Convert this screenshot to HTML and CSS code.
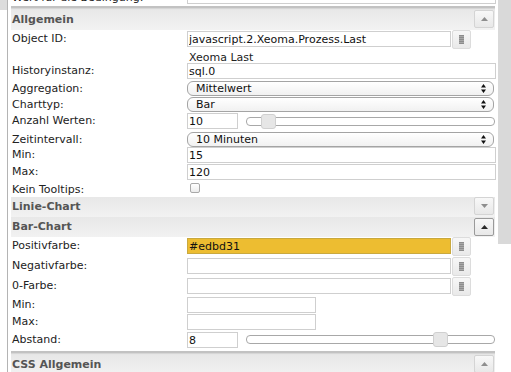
FILE: index.html
```html
<!DOCTYPE html>
<html lang="de">

<head>
    <meta charset="UTF-8">
    <meta name="viewport" content="width=device-width, initial-scale=1.0">
    <title>Widget Attribute - Chart</title>
    <link rel="stylesheet" href="styles.css">
</head>

<body>
    <div class="screen">
        <div class="gutter"></div>

        <div class="panel">
            <!-- last row of the previous group, scrolled half out of view -->
            <div class="row row-cut">
                <span class="lbl">Wert für die Bedingung:</span>
                <input class="field full" type="text" value="">
            </div>
            <div class="rule"></div>

            <div class="group">
                <span class="group-title">Allgemein</span>
                <span class="toggle"><svg width="7" height="4" viewBox="0 0 7 4"><path d="M0 4L3.5 0L7 4Z" /></svg></span>
            </div>

            <div class="row h20">
                <span class="lbl">Object ID:</span>
                <input class="field wide" type="text" value="javascript.2.Xeoma.Prozess.Last">
                <span class="pick"><svg width="5" height="9" viewBox="0 0 5 9"><rect width="5" height="9" fill="#8c8c8c" /><path d="M0 1.5H5M0 3.5H5M0 5.5H5M0 7.5H5" stroke="#a8a8a8" stroke-width="1" /></svg></span>
            </div>
            <div class="row h12">
                <span class="lbl"></span>
                <span class="note">Xeoma Last</span>
            </div>
            <div class="row h18">
                <span class="lbl">Historyinstanz:</span>
                <input class="field full" type="text" value="sql.0">
            </div>
            <div class="row h16">
                <span class="lbl">Aggregation:</span>
                <div class="select">Mittelwert<svg width="5" height="9" viewBox="0 0 5 9"><path d="M0 3.5L2.5 0L5 3.5ZM0 5.5L2.5 9L5 5.5Z" /></svg></div>
            </div>
            <div class="row h16">
                <span class="lbl">Charttyp:</span>
                <div class="select">Bar<svg width="5" height="9" viewBox="0 0 5 9"><path d="M0 3.5L2.5 0L5 3.5ZM0 5.5L2.5 9L5 5.5Z" /></svg></div>
            </div>
            <div class="row h18">
                <span class="lbl">Anzahl Werten:</span>
                <input class="field small" type="text" value="10">
                <div class="slider slider-count"><span class="handle" style="left: 14px"></span></div>
            </div>
            <div class="row h17 pt2">
                <span class="lbl">Zeitintervall:</span>
                <div class="select">10 Minuten<svg width="5" height="9" viewBox="0 0 5 9"><path d="M0 3.5L2.5 0L5 3.5ZM0 5.5L2.5 9L5 5.5Z" /></svg></div>
            </div>
            <div class="row h17 pt0">
                <span class="lbl">Min:</span>
                <input class="field full" type="text" value="15">
            </div>
            <div class="row h17 pt0">
                <span class="lbl">Max:</span>
                <input class="field full" type="text" value="120">
            </div>
            <div class="row h16">
                <span class="lbl">Kein Tooltips:</span>
                <span class="check"></span>
            </div>

            <div class="group">
                <span class="group-title">Linie-Chart</span>
                <span class="toggle"><svg width="7" height="4" viewBox="0 0 7 4"><path d="M0 0L3.5 4L7 0Z" /></svg></span>
            </div>
            <div class="group">
                <span class="group-title">Bar-Chart</span>
                <span class="toggle active"><svg width="7" height="4" viewBox="0 0 7 4"><path d="M0 4L3.5 0L7 4Z" /></svg></span>
            </div>

            <div class="row h20">
                <span class="lbl">Positivfarbe:</span>
                <input class="field wide colour" type="text" value="#edbd31">
                <span class="pick"><svg width="5" height="9" viewBox="0 0 5 9"><rect width="5" height="9" fill="#8c8c8c" /><path d="M0 1.5H5M0 3.5H5M0 5.5H5M0 7.5H5" stroke="#a8a8a8" stroke-width="1" /></svg></span>
            </div>
            <div class="row h20">
                <span class="lbl">Negativfarbe:</span>
                <input class="field wide" type="text" value="">
                <span class="pick"><svg width="5" height="9" viewBox="0 0 5 9"><rect width="5" height="9" fill="#8c8c8c" /><path d="M0 1.5H5M0 3.5H5M0 5.5H5M0 7.5H5" stroke="#a8a8a8" stroke-width="1" /></svg></span>
            </div>
            <div class="row h20">
                <span class="lbl">0-Farbe:</span>
                <input class="field wide" type="text" value="">
                <span class="pick"><svg width="5" height="9" viewBox="0 0 5 9"><rect width="5" height="9" fill="#8c8c8c" /><path d="M0 1.5H5M0 3.5H5M0 5.5H5M0 7.5H5" stroke="#a8a8a8" stroke-width="1" /></svg></span>
            </div>
            <div class="row h17 pt0">
                <span class="lbl">Min:</span>
                <input class="field medium" type="text" value="">
            </div>
            <div class="row h17 pt0">
                <span class="lbl">Max:</span>
                <input class="field medium" type="text" value="">
            </div>
            <div class="row h19">
                <span class="lbl">Abstand:</span>
                <input class="field small" type="text" value="8">
                <div class="slider slider-gap"><span class="handle" style="left: 186px"></span></div>
            </div>
            <div class="rule"></div>

            <div class="group">
                <span class="group-title">CSS Allgemein</span>
                <span class="toggle"><svg width="7" height="4" viewBox="0 0 7 4"><path d="M0 4L3.5 0L7 4Z" /></svg></span>
            </div>
        </div>

        <div class="scroll"></div>
    </div>
</body>

</html>
```

FILE: styles.css
```css
/* Reset and base styles */
* {
    margin: 0;
    padding: 0;
    box-sizing: border-box;
}

body {
    background-color: white;
    color: #222;
    font-family: 'DejaVu Sans', Verdana, sans-serif;
    font-size: 11px;
}

/* Frame */
.screen {
    display: flex;
    height: 372px;
    overflow: hidden;
}

.gutter {
    width: 7px;
    flex-shrink: 0;
}

.gutter::before {
    content: "";
    display: block;
    height: 10px;
    background-color: #dcdcdc;
}

.panel {
    width: 489px;
    flex-shrink: 0;
    border-left: 1px solid #b4b4b4;
    padding-left: 3px;
}

.scroll {
    width: 13px;
    height: 244px;
    margin-left: 2px;
    background-color: #d9d9d9;
}

/* Rows */
.row {
    display: flex;
    align-items: flex-start;
    padding-top: 1px;
}

.row-cut {
    height: 15px;
    margin-top: -10px;
    padding-top: 0;
}

.h12 { height: 12px; }
.h16 { height: 16px; }
.h17 { height: 17px; }
.h18 { height: 18px; }
.h19 { height: 19px; }
.h20 { height: 20px; }
.pt0 { padding-top: 0; }
.pt2 { padding-top: 2px; }

.lbl {
    width: 176px;
    flex-shrink: 0;
    padding-left: 1px;
    line-height: 16px;
    white-space: nowrap;
}

.note {
    padding-left: 2px;
    line-height: 13px;
}

/* Inputs */
.field {
    height: 16px;
    border: 1px solid #cfcfcf;
    background-color: white;
    padding: 0 1px;
    font: inherit;
    color: #111;
    outline: none;
}

.h20 .field {
    height: 16px;
}

.row-cut .field {
    height: 14px;
}

.full { width: 309px; }
.wide { width: 264px; }
.medium { width: 129px; }
.small { width: 51px; }

.colour {
    background-color: #edbd31;
    border-color: #c9a93f;
}

.pick {
    display: flex;
    align-items: center;
    justify-content: center;
    width: 19px;
    height: 19px;
    margin-top: -1px;
    margin-left: 1px;
    border: 1px solid #dcdcdc;
    border-radius: 2px;
    background: linear-gradient(#f7f7f7, #e9e9e9);
}

.select {
    display: flex;
    align-items: center;
    justify-content: space-between;
    width: 307px;
    height: 15px;
    padding: 0 7px 0 8px;
    border: 1px solid #a4a4a4;
    border-radius: 6px;
    background: linear-gradient(#ffffff, #f1f1f1);
    line-height: 13px;
    color: #111;
}

.select svg {
    fill: #111;
}

.check {
    width: 10px;
    height: 10px;
    margin: 1px 0 0 3px;
    border: 1px solid #a9a9a9;
    border-radius: 2px;
    background: linear-gradient(#ffffff, #ececec);
}

/* Slider */
.slider {
    position: relative;
    width: 249px;
    height: 9px;
    margin-left: 8px;
    border: 1px solid #a8a8a8;
    border-radius: 4px;
    background-color: white;
}

.slider-count { margin-top: 4px; }
.slider-gap { margin-top: 3px; }

.handle {
    position: absolute;
    top: -4px;
    width: 15px;
    height: 15px;
    border: 1px solid #d0d0d0;
    border-radius: 3px;
    background-color: #e6e6e6;
}

/* Group headers */
.rule {
    height: 4px;
    margin-top: 1px;
    margin-right: 1px;
    border-top: 2px solid #c2c2c2;
    border-bottom: 1px solid #e6e6e6;
    background-color: #d6d6d6;
}

.group {
    display: flex;
    align-items: flex-start;
    justify-content: space-between;
    height: 20px;
    margin-right: 1px;
    padding-right: 1px;
    background: linear-gradient(#e8e8e8, #f2f2f2);
}

.group-title {
    padding-left: 1px;
    line-height: 19px;
    font-weight: 700;
    color: #555;
}

.toggle {
    display: flex;
    align-items: center;
    justify-content: center;
    width: 20px;
    height: 18px;
    border: 1px solid #d4d4d4;
    border-radius: 2px;
    background: linear-gradient(#f8f8f8, #e8e8e8);
}

.toggle svg {
    fill: #8e8e8e;
}

.toggle.active {
    border-color: #9a9a9a;
    margin-top: 1px;
}

.toggle.active svg {
    fill: #2a2a2a;
}
```
